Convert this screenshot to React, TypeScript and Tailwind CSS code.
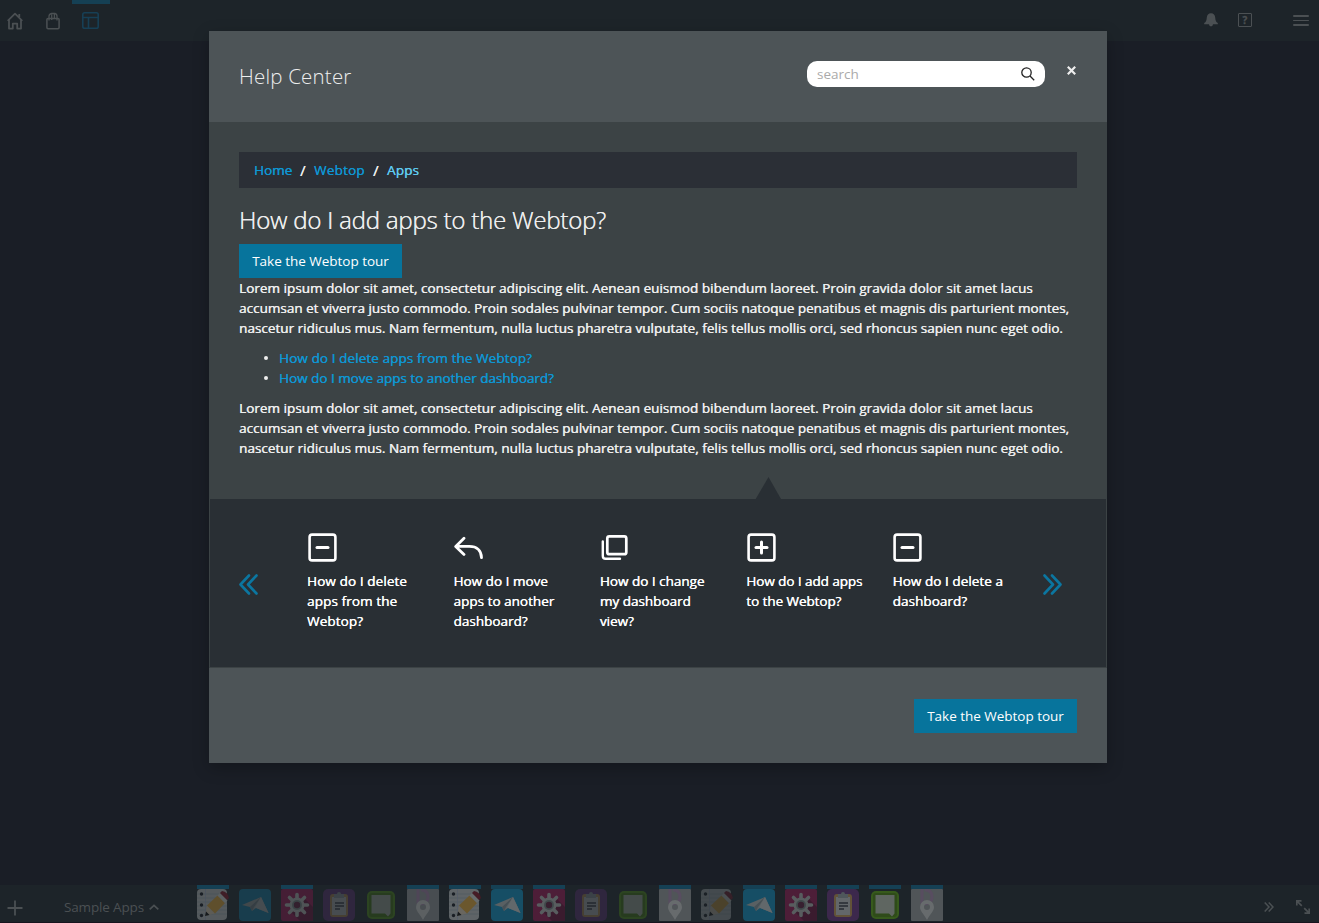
import React from "react";

type IconProps = { className?: string };

const HomeIcon = ({ className }: IconProps) => (
  <svg viewBox="0 0 16 18" className={className} fill="none" stroke="currentColor" strokeWidth="1.8">
    <path d="M.7 8.8 8 1.6l7.3 7.2M2 8v8.6h3.8v-5h4.4v5H14V8M12.3 2v3" strokeLinejoin="round" />
  </svg>
);

const BagIcon = ({ className }: IconProps) => (
  <svg viewBox="0 0 14 18" className={className} fill="none" stroke="currentColor" strokeWidth="1.5">
    <rect x=".9" y="6.4" width="12.2" height="10.4" rx="1.2" />
    <path d="M3 8.400V4.500q0-2.500 2.500-3h3.500q2 .4 2 3v3.900M5.700 8V2.500M8.400 2V7" strokeWidth="1.3" />
  </svg>
);

const LayoutIcon = ({ className }: IconProps) => (
  <svg viewBox="0 0 17 17" className={className} fill="none" stroke="currentColor" strokeWidth="1.6">
    <rect x=".8" y=".8" width="15.400" height="15.400" rx="1.800" />
    <path d="M1 5.500h15M6.500 5.500V16" />
  </svg>
);

const BellIcon = ({ className }: IconProps) => (
  <svg viewBox="0 0 14 14" className={className} fill="currentColor">
    <path d="M7 .3C9.600.3 11 2 11.200 4.500c.2 3 .8 4.600 2.600 5.500v1.300H.2V10C2 9.100 2.600 7.500 2.800 4.500 3 2 4.400.3 7 .3ZM5 11h4c0 1.500-.9 2.300-2 2.300s-2-.8-2-2.300Z" />
  </svg>
);

const SquareIcon = ({ plus }: { plus?: boolean }) => (
  <svg viewBox="0 0 29 29" className="h-[29px] w-[29px]" fill="none" stroke="currentColor">
    <rect x="1.600" y="1.600" width="25.800" height="25.800" rx="2.500" strokeWidth="2.600" />
    <path d="M9 14.500h11" strokeWidth="3" strokeLinecap="round" />
    {plus && <path d="M14.500 9v11" strokeWidth="3" strokeLinecap="round" />}
  </svg>
);

const ReplyIcon = () => (
  <svg viewBox="0 0 29 29" className="h-[29px] w-[29px]" fill="none" stroke="currentColor" strokeWidth="2.800" strokeLinecap="round" strokeLinejoin="round">
    <path d="M10 5.200 1.700 13.400l8.300 8M2 13.400h13.500c7 0 11.800 4 12 11.300" />
  </svg>
);

const CopyIcon = () => (
  <svg viewBox="0 0 29 29" className="h-[29px] w-[29px]" fill="none" stroke="currentColor" strokeWidth="2.700" strokeLinecap="round" strokeLinejoin="round">
    <rect x="7.300" y="3.400" width="19" height="17.800" rx="2" />
    <path d="M2.800 8.500V23q0 2.800 2.800 2.800H20" strokeWidth="2.400" />
  </svg>
);

const Chevrons = ({ flip }: { flip?: boolean }) => (
  <svg viewBox="0 0 20 21" className={flip ? "h-[21px] w-5 -scale-x-100" : "h-[21px] w-5"} fill="none" stroke="#0b76a0" strokeWidth="2.600" strokeLinecap="round" strokeLinejoin="round">
    <path d="m10 1.500-8.500 9 8.500 9M17.500 1.500l-8.500 9 8.500 9" />
  </svg>
);

const PencilTile = () => (
  <svg viewBox="0 0 32 32" className="h-8 w-8">
    <rect x="0" y="0" width="30" height="31" rx="4" fill="#5f6467" />
    <path d="M0 5h30M0 9h30M0 13h30M0 17h30M0 21h30M0 25h30" stroke="#525960" strokeWidth=".7" />
    <path d="M8.500 0v31" stroke="#535b6c" strokeWidth=".6" />
    <g fill="#191e24"><circle cx="4.500" cy="5" r="1.700" /><circle cx="4.500" cy="16" r="1.700" /><circle cx="4.500" cy="26.500" r="1.700" /></g>
    <path d="m8 27 2-10.500 8 8Z" fill="#69665f" />
    <path d="m8 27 1-4.500 3.500 3.500Z" fill="#15191c" />
    <path d="m10 16.500 10.500-10 7.500 7.500-10 10.500Z" fill="#6b572d" />
    <path d="m20.500 6.500 2.500-2.500 7.500 7.500-2.500 2.500Z" fill="#686c6d" />
    <path d="M23 4 25 2q6 1 7 7l-2 2Z" fill="#451c26" />
  </svg>
);

const PlaneTile = () => (
  <svg viewBox="0 0 32 32" className="h-8 w-8">
    <rect width="32" height="32" rx="4" fill="#164e65" />
    <path d="M3 16 22 8l7.500 16-12.500-5-4 3-2-4Z" fill="#596063" />
    <path d="m11 18 11-10-7 10-2 4Z" fill="#465056" />
    <path d="M22 8 16 18.500 29.500 24Z" fill="#62686b" />
  </svg>
);

const GearTile = () => (
  <svg viewBox="0 0 32 32" className="h-8 w-8">
    <rect width="32" height="32" rx="2" fill="#4d1e38" />
    <path d="m24 10 8 8v14H19l-9-9Z" fill="#3a1b2e" />
    <circle cx="16" cy="16" r="7.500" fill="#585d5f" />
    <path d="M16 5.500v21M5.500 16h21M8.500 8.500l15 15M23.500 8.500l-15 15" stroke="#585d5f" strokeWidth="3.600" strokeLinecap="round" />
    <circle cx="16" cy="16" r="5" fill="#414a4c" />
    <circle cx="16" cy="16" r="3.200" fill="#372030" />
  </svg>
);

const ClipTile = () => (
  <svg viewBox="0 0 32 32" className="h-8 w-8">
    <rect width="32" height="32" rx="5" fill="#3c284c" />
    <rect x="7" y="5" width="18" height="23" rx="3" fill="#625238" />
    <rect x="9" y="8" width="14" height="18" fill="#63676a" />
    <path d="M11 5h3q0-2 2-2t2 2h3v4H11Z" fill="#4f575b" />
    <path d="M12 14h9M12 17h9M12 20h5" stroke="#272b32" strokeWidth="1.300" />
  </svg>
);

const ChatTile = () => (
  <svg viewBox="0 0 32 32" className="h-8 w-8">
    <rect x="2" y="2" width="28" height="28" rx="5" fill="#375a1c" />
    <rect x="4" y="4" width="24" height="24" rx="3" fill="#2f4b1a" />
    <path d="M6.500 6H25.500V24.500l-2.500 3-3-3H6.500Z" fill="#5f6661" />
  </svg>
);

const PinTile = () => (
  <svg viewBox="0 0 32 32" className="h-8 w-8">
    <rect width="32" height="32" rx="1" fill="#505558" />
    <path d="M11 0v15M11 15q10 0 10-7T14 1" fill="none" stroke="#584d60" strokeWidth="3" />
    <path fillRule="evenodd" d="M16 31C12 24 9 22 9 18a7 7 0 0 1 14 0c0 4-3 6-7 13Zm0-16a3 3 0 1 0 0 6 3 3 0 0 0 0-6Z" fill="#676b6d" />
  </svg>
);

const tiles = [PencilTile, PlaneTile, GearTile, ClipTile, ChatTile, PinTile];
const running = [true, false, true, false, false, true, true, true, true, false, false, true, false, true, true, true, true, true];

const Paragraph = () => (
  <p className="whitespace-nowrap">
    <span className="block tracking-[0.025px]">Lorem ipsum dolor sit amet, consectetur adipiscing elit. Aenean euismod bibendum laoreet. Proin gravida dolor sit amet lacus</span>
    <span className="block tracking-[-0.003px]">accumsan et viverra justo commodo. Proin sodales pulvinar tempor. Cum sociis natoque penatibus et magnis dis parturient montes,</span>
    <span className="block tracking-[0.007px]">nascetur ridiculus mus. Nam fermentum, nulla luctus pharetra vulputate, felis tellus mollis orci, sed rhoncus sapien nunc eget odio.</span>
  </p>
);

const topics = [
  { icon: <SquareIcon />, lines: ["How do I delete", "apps from the", "Webtop?"], spacing: "tracking-[0.100px]" },
  { icon: <ReplyIcon />, lines: ["How do I move", "apps to another", "dashboard?"], spacing: "tracking-[0.020px]" },
  { icon: <CopyIcon />, lines: ["How do I change", "my dashboard", "view?"], spacing: "tracking-[0px]" },
  { icon: <SquareIcon plus />, lines: ["How do I add apps", "to the Webtop?"], spacing: "tracking-[-0.060px]" },
  { icon: <SquareIcon />, lines: ["How do I delete a", "dashboard?"], spacing: "tracking-[0.050px]" },
];

const TourButton = () => (
  <button className="flex h-[34px] w-[163px] items-center justify-center bg-[#07749c] whitespace-nowrap text-white tracking-[-0.02px]">
    Take the Webtop tour
  </button>
);

export default function App() {
  return (
    <div className="relative flex h-[923px] w-full flex-col overflow-hidden bg-[#1a1e26] font-['Open_Sans','Noto_Sans',sans-serif] text-[13.5px] leading-5 font-medium text-[#eee]">
      <header className="flex h-[41px] shrink-0 items-start bg-[#1d2429] text-[#4b5053]">
        <HomeIcon className="mt-3 ml-[7px] h-[18px] w-4" />
        <BagIcon className="mt-3 ml-[23px] h-[18px] w-[14px]" />
        <div className="ml-3 flex w-[38px] flex-col items-start border-t-4 border-[#154054] pt-2 pl-[10px]">
          <LayoutIcon className="h-[17px] w-[17px] text-[#173f55]" />
        </div>
        <BellIcon className="mt-[13px] ml-auto h-[14px] w-[14px]" />
        <div className="mt-[13px] ml-5 flex h-[14px] w-[14px] items-center justify-center rounded-[1px] border-[1.5px] border-current text-[10px] leading-none font-bold [-webkit-text-stroke:0.3px]">?</div>
        <div className="mt-[15px] mr-[10px] ml-[41px] flex h-[11px] w-4 flex-col justify-between">
          <i className="h-[1.7px] rounded bg-current" />
          <i className="h-[1.7px] rounded bg-current" />
          <i className="h-[1.7px] rounded bg-current" />
        </div>
      </header>

      <div className="grow" />

      <footer className="flex h-[38px] shrink-0 items-start border-b border-[#17141e] bg-[#1d2429] text-[#4b5053]">
        <svg viewBox="0 0 16 16" className="mt-[15px] ml-[7px] h-4 w-4" stroke="currentColor" strokeWidth="1.800"><path d="M8 .5v15M.5 8h15" /></svg>
        <div className="mt-3 ml-[41px] flex w-[133px] items-center gap-[5px] whitespace-nowrap font-normal tracking-[-0.15px]">
          Sample Apps
          <svg viewBox="0 0 10 6" className="h-1.5 w-2.5" fill="none" stroke="currentColor" strokeWidth="1.700"><path d="m.7 5.300 4.300-4 4.300 4" /></svg>
        </div>
        <div className="flex gap-2.5">
          {running.map((active, i) => {
            const Tile = tiles[i % tiles.length];
            return (
              <div key={i} className={active ? "border-t-4 border-[#154054]" : "border-t-4 border-transparent"}>
                <div className={active ? (i > 5 ? "" : "opacity-85") : "opacity-60"}><Tile /></div>
              </div>
            );
          })}
        </div>
        <svg viewBox="0 0 10 10" className="mt-[17px] ml-auto h-[10px] w-[10px]" fill="none" stroke="currentColor" strokeWidth="1.500"><path d="m.7.5 4.300 4.500L.7 9.500M4.700.5 9 5 4.700 9.500" /></svg>
        <svg viewBox="0 0 14 14" className="mt-[15px] mr-[9px] ml-[22px] h-[14px] w-[14px]" fill="none" stroke="currentColor" strokeWidth="1.700"><path d="M.8 5.500V.8H5.500M.8.8l5 5M13.200 8.500v4.700H8.500M13.200 13.200l-5-5" /></svg>
      </footer>

      <div className="absolute inset-0 pt-[31px] pl-[209px]">
        <section role="dialog" className="flex h-[732px] w-[898px] flex-col bg-[#3c4345] shadow-[0_5px_15px_rgba(0,0,0,0.25)] [text-shadow:0.35px_0_0_currentColor]">
          <div className="flex h-[91px] shrink-0 items-start bg-[#4d5457] pr-[31px] pl-[30px] [text-shadow:none]">
            <h1 className="mt-[31px] text-[20.5px] leading-7 font-light whitespace-nowrap tracking-[0.200px]">Help Center</h1>
            <div className="mt-[30px] ml-auto flex h-[26px] w-[238px] items-center justify-between rounded-[10px] bg-white px-[10px]">
              <span className="font-normal text-[#aaa]">search</span>
              <svg viewBox="0 0 14 14" className="h-[14px] w-[14px]" fill="none" stroke="#222" strokeWidth="1.300"><circle cx="5.500" cy="5.500" r="4.700" /><path d="m9 9 4.200 4.200" /></svg>
            </div>
            <svg viewBox="0 0 9 9" className="mt-[35px] ml-[22px] h-[9px] w-[9px]" stroke="#eee" strokeWidth="2.200"><path d="m.8.8 7.400 7.400M8.200.8.8 8.200" /></svg>
          </div>

          <div className="flex h-[377px] shrink-0 flex-col px-[30px] pt-[30px]">
            <nav className="flex h-9 shrink-0 items-center bg-[#2b2f36] pl-[15px] whitespace-nowrap">
              <a className="w-[46px] text-[#0e96d3]">Home</a>
              <span className="w-[14px] text-[15px]">/</span>
              <a className="w-[59px] text-[#0e96d3] tracking-[0.200px]">Webtop</a>
              <span className="w-[14px] text-[15px]">/</span>
              <a className="text-[#5fcbf0] tracking-[0.150px]">Apps</a>
            </nav>
            <h2 className="mt-[17px] mb-[9px] text-[24px] leading-[30px] font-light whitespace-nowrap tracking-[-0.2px]">How do I add apps to the Webtop?</h2>
            <TourButton />
            <Paragraph />
            <ul className="my-[10px] whitespace-nowrap text-[#0e96d3]">
              <li className="flex items-center"><i className="mr-[11px] ml-[25px] h-1 w-1 rounded-full bg-[#eee]" /><a className="tracking-[0.090px]">How do I delete apps from the Webtop?</a></li>
              <li className="flex items-center"><i className="mr-[11px] ml-[25px] h-1 w-1 rounded-full bg-[#eee]" /><a className="tracking-[-0.020px]">How do I move apps to another dashboard?</a></li>
            </ul>
            <Paragraph />
            <svg viewBox="0 0 26 22" className="mt-auto ml-[516px] h-[22px] w-[26px] shrink-0"><path d="M13.500 0 26 22H.7Z" fill="#292f34" /></svg>
          </div>

          <div className="mx-px flex h-[168px] shrink-0 bg-[#292f34] pl-[29px]">
            <div className="mt-[75px] w-[68px]"><Chevrons /></div>
            {topics.map((t, i) => (
              <div key={i} className="w-[146.4px] pt-[34px] whitespace-nowrap text-white">
                <div className="ml-[0.700px]">{t.icon}</div>
                <div className={t.spacing}>
                  <div className="h-[9px]" />
                  {t.lines.map((l) => <div key={l}>{l}</div>)}
                </div>
              </div>
            ))}
            <div className="mt-[75px] ml-[3px]"><Chevrons flip /></div>
          </div>

          <div className="flex grow items-start justify-end border-t border-[#3c4345] bg-[#4d5457] pt-[31px] pr-[30px]">
            <TourButton />
          </div>
        </section>
      </div>
    </div>
  );
}
